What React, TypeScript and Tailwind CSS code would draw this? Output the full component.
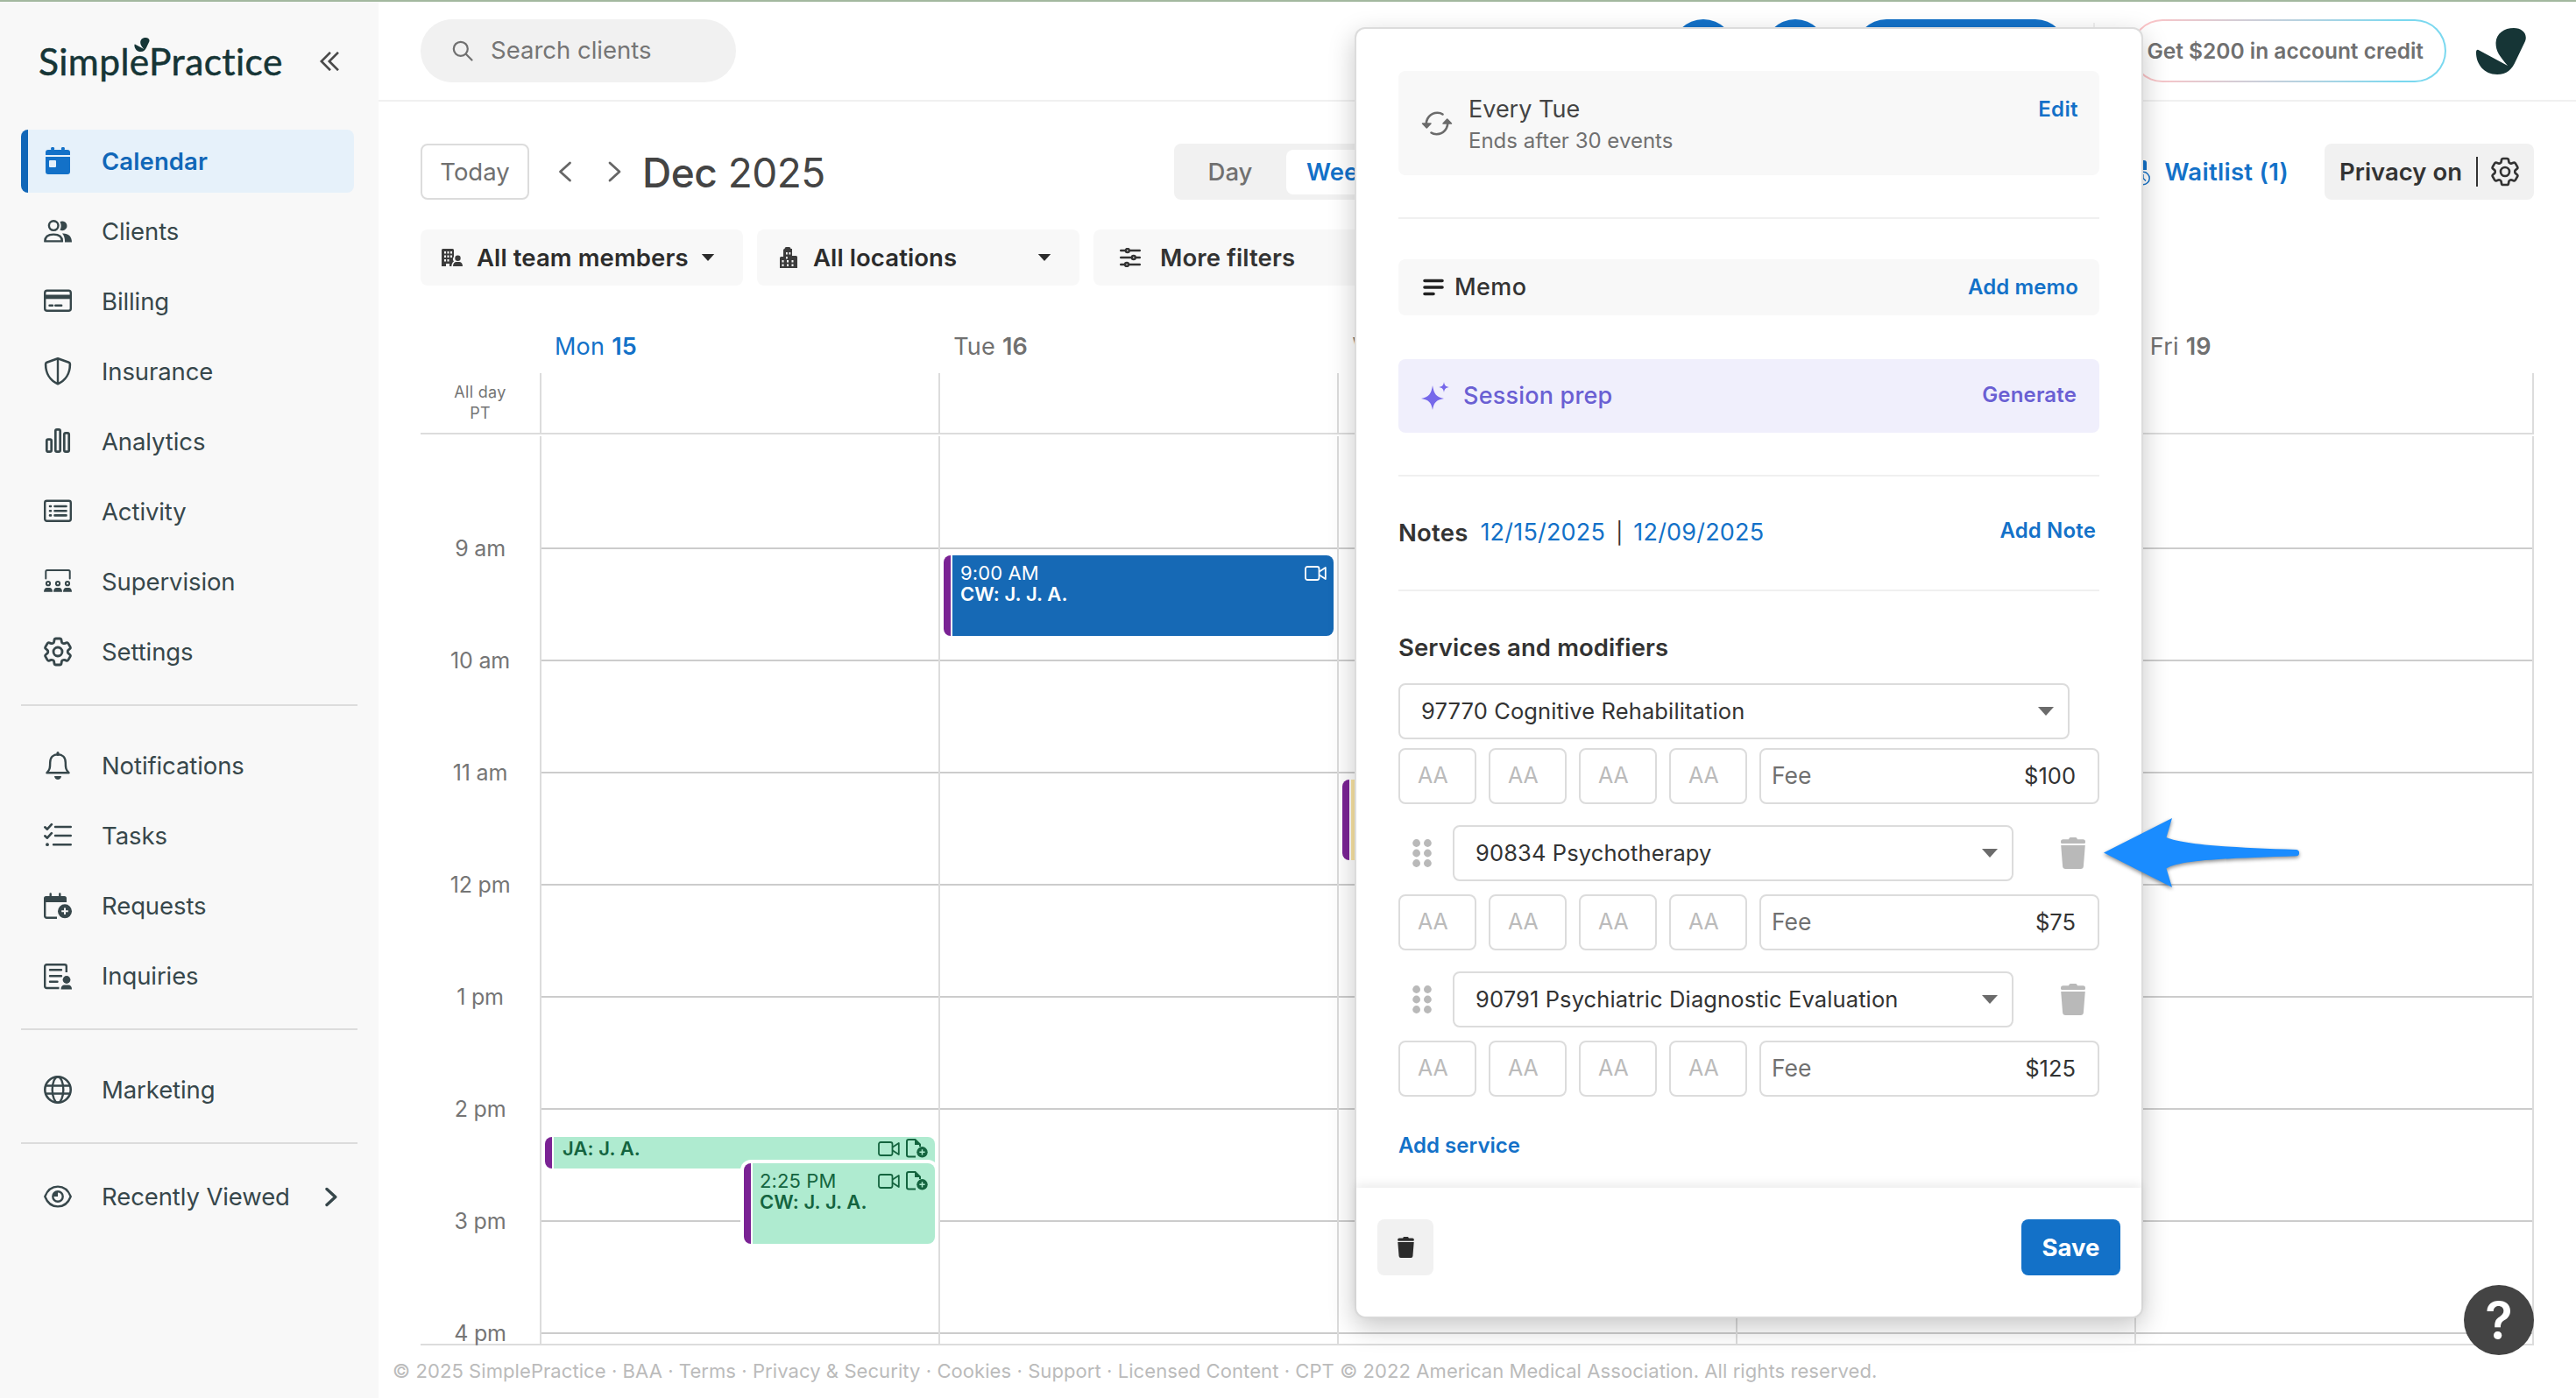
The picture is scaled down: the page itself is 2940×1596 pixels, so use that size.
import type { ReactNode } from "react";
import { HiOutlineCog6Tooth } from "react-icons/hi2";

const Icon = (props: { children: ReactNode; className?: string }) => (
  <svg viewBox="0 0 32 32" fill="none" stroke="currentColor" strokeWidth="2.4" className={props.className ?? "size-8"}>
    {props.children}
  </svg>
);

const CalendarIcon = () => (
  <Icon>
    <g fill="currentColor" stroke="none">
      <rect x="8.2" y="0" width="3.8" height="6" rx="1.2" />
      <rect x="20" y="0" width="3.8" height="6" rx="1.2" />
      <path d="M2 9V6a3 3 0 0 1 3-3h22a3 3 0 0 1 3 3v3z" />
      <path fillRule="evenodd" d="M2 11h28v17a3 3 0 0 1-3 3H5a3 3 0 0 1-3-3zM7 15a1 1 0 0 0-1 1v6a1 1 0 0 0 1 1h6a1 1 0 0 0 1-1v-6a1 1 0 0 0-1-1z" />
    </g>
  </Icon>
);

const ClientsIcon = () => (
  <Icon>
    <circle cx="11.2" cy="9.6" r="5.3" />
    <path d="M1.3 27.4c0-5.4 4.2-7.8 9.8-7.8s9.8 2.4 9.8 7.8z" strokeLinejoin="round" />
    <path d="M18.4 5.2a5.4 5.4 0 1 1 0 9.4c1.7-2.9 1.7-6.5 0-9.4z" fill="currentColor" stroke="none" />
    <path d="M21 18.6c6.600-.4 11 3 11 10h-8c.2-4-.7-7.400-3-10z" fill="currentColor" stroke="none" />
  </Icon>
);

const BillingIcon = () => (
  <Icon>
    <rect x="1.2" y="3.8" width="29.6" height="23" rx="2.6" />
    <rect x="1.2" y="8.5" width="29.6" height="4.8" fill="currentColor" stroke="none" />
    <path d="M6.5 20.7h3.5M13.2 20.7h7" strokeLinecap="round" />
  </Icon>
);

const InsuranceIcon = () => (
  <Icon>
    <path d="M16 1.2 28.6 5.8c1 .4 1.3 1 1.3 2C29.9 18 25 26.5 16 30.2 7 26.5 2.1 18 2.1 7.8c0-1 .3-1.6 1.3-2z" strokeWidth="2.6" strokeLinejoin="round" />
    <path d="M16 1.5v28.5" />
  </Icon>
);

const AnalyticsIcon = () => (
  <Icon>
    <rect x="3.3" y="13.7" width="5.4" height="14" rx="1.6" strokeWidth="2.7" />
    <rect x="13.3" y="2.3" width="5.4" height="25.4" rx="1.6" strokeWidth="2.7" />
    <rect x="23.3" y="6.3" width="5.4" height="21.4" rx="1.6" strokeWidth="2.7" />
  </Icon>
);

const ActivityIcon = () => (
  <Icon>
    <rect x="1.2" y="3.8" width="29.6" height="23" rx="2.2" />
    <path d="M7 10h1M7 15.2h1M7 20.4h1M12.5 10h13M12.5 15.2h13M12.5 20.4h13" strokeWidth="2.6" strokeLinecap="round" />
  </Icon>
);

const SupervisionIcon = () => (
  <Icon>
    <path d="M2.3 12.5V4.5c0-1 .6-1.5 1.5-1.5h24.4c.9 0 1.5.5 1.5 1.5v8" strokeWidth="2" strokeLinecap="round" />
    {[5, 16, 27].map((x) => (
      <g key={x} transform={`translate(${x} 0)`}>
        <circle cy="18.2" r="2.1" strokeWidth="2" />
        <path d="M-5 27.7c0-3 1.5-4.7 3.3-4.7h3.4C3.5 23 5 24.7 5 27.7z" fill="currentColor" stroke="none" />
      </g>
    ))}
  </Icon>
);

const BellIcon = () => (
  <Icon>
    <path d="M16 1.5v2" strokeWidth="3" strokeLinecap="round" />
    <path d="M3.4 24.3C7 21 7.2 18 7.2 12.5 7.2 6.5 11 3.2 16 3.2s8.8 3.3 8.8 9.3c0 5.5.2 8.5 3.8 11.8z" strokeLinejoin="round" />
    <path d="M12 28h8c-.3 2.4-1.9 4-4 4s-3.700-1.600-4-4z" fill="currentColor" stroke="none" />
  </Icon>
);

const TasksIcon = () => (
  <Icon>
    <path d="M13 6h17.800M13 16h17.800M11 26.200h19.800" strokeLinecap="round" />
    <path d="m1.300 6.300 2.600 2.400 5-5.500M1.300 16.300l2.600 2.400 5-5.500" strokeWidth="2.6" strokeLinecap="round" strokeLinejoin="round" />
    <circle cx="4" cy="26.2" r="1.9" fill="currentColor" stroke="none" />
  </Icon>
);

const RequestsIcon = () => (
  <Icon>
    <path d="M7.7 2.5v5M18.3 2.5v5" strokeLinecap="round" />
    <path d="M15 29.7H3.2a2 2 0 0 1-2-2V9" />
    <path d="M0 12V7.5A2.5 2.5 0 0 1 2.5 5h21A2.5 2.5 0 0 1 26 7.5V12z" fill="currentColor" stroke="none" />
    <circle cx="24" cy="22.3" r="8" fill="currentColor" stroke="none" />
    <path d="M24 18.5v7.600M20.200 22.300h7.600" stroke="#f8f8f8" strokeWidth="2" />
  </Icon>
);

const InquiriesIcon = () => (
  <Icon>
    <path d="M17.5 30H3.2a2 2 0 0 1-2-2V5.2a2 2 0 0 1 2-2h20.600a2 2 0 0 1 2 2V12" />
    <path d="M7 9.3h13M7 16.3h13M7 22.8h8.5" strokeLinecap="round" />
    <circle cx="26" cy="20.5" r="4.4" fill="currentColor" stroke="none" />
    <path d="M19.5 31.5c0-3.5 1.800-5 4-5h4.5c2.200 0 4 1.500 4 5z" fill="currentColor" stroke="none" />
  </Icon>
);

const GlobeIcon = () => (
  <Icon>
    <circle cx="16" cy="16" r="14.7" strokeWidth="2.6" />
    <ellipse cx="16" cy="16" rx="6.3" ry="14.7" />
    <path d="M2 11.500h28M2 20.500h28" />
  </Icon>
);

const EyeIcon = () => (
  <Icon>
    <path d="M1.3 16C4 9 9.5 4.600 16 4.600S28 9 30.700 16C28 23 22.500 27.400 16 27.400S4 23 1.300 16z" strokeLinejoin="round" />
    <circle cx="16" cy="16" r="5.7" />
    <path d="M16 10.500v5.500h-5.500a5.500 5.500 0 0 1 5.500-5.500z" fill="currentColor" stroke="none" />
  </Icon>
);

const VideoIcon = () => (
  <svg viewBox="0 0 25 17" fill="none" stroke="currentColor" strokeWidth="1.8" strokeLinejoin="round" className="h-[17px] w-[25px]">
    <rect x="1" y="1" width="15.5" height="15" rx="2.2" />
    <path d="M16.5 6.800 23.800 2v13l-7.300-4.800" />
  </svg>
);

const NoteAddIcon = () => (
  <svg viewBox="0 0 25 22" fill="none" stroke="currentColor" strokeWidth="2" className="h-[22px] w-[25px]">
    <path d="M11 20.500H3a2 2 0 0 1-2-2V3a2 2 0 0 1 2-2h7.500L16 6.500V9" />
    <path d="M10 0v7h7z" fill="currentColor" stroke="none" />
    <circle cx="18.5" cy="15.3" r="6.2" fill="currentColor" stroke="none" />
    <path d="M18.5 12.200v6.200M15.400 15.300h6.200" stroke="#afebd0" strokeWidth="1.5" />
  </svg>
);

const TrashIcon = (props: { className: string }) => (
  <svg viewBox="0 0 28 36" fill="currentColor" className={props.className}>
    <path d="M9 2.200C9.400.6 10.500 0 11.500 0h5c1 0 2.100.6 2.500 2.200h6.300A2.700 2.700 0 0 1 28 4.900v.6A1.500 1.500 0 0 1 26.500 7h-25A1.500 1.500 0 0 1 0 5.500v-.6a2.700 2.700 0 0 1 2.700-2.700z" />
    <path d="M.2 9h27.600l-1.900 24a3.300 3.300 0 0 1-3.300 3H5.400a3.300 3.300 0 0 1-3.300-3z" />
  </svg>
);

const LeafIcon = (props: { className: string }) => (
  <svg viewBox="0 0 57 53" fill="#163536" className={props.className}>
    <path d="M36 43C27 32 22.500 27 22.500 17 23 6 32 0 43 0 53 0 59 7 56 15L45 38c-4 9-10 15-21 15C9 53 0 41 0 28c0-3 1.500-4 3.500-2.500z" />
  </svg>
);

const Caret = (props: { className?: string }) => (
  <svg viewBox="0 0 18 10" fill="currentColor" className={props.className ?? "h-2 w-4"}>
    <path d="M0 0h18L9 10z" />
  </svg>
);

const mainNav = [
  { label: "Clients", icon: <ClientsIcon /> },
  { label: "Billing", icon: <BillingIcon /> },
  { label: "Insurance", icon: <InsuranceIcon /> },
  { label: "Analytics", icon: <AnalyticsIcon /> },
  { label: "Activity", icon: <ActivityIcon /> },
  { label: "Supervision", icon: <SupervisionIcon /> },
  { label: "Settings", icon: <HiOutlineCog6Tooth className="-mx-1 size-10" strokeWidth={1.7} /> },
];

const taskNav = [
  { label: "Notifications", icon: <BellIcon /> },
  { label: "Tasks", icon: <TasksIcon /> },
  { label: "Requests", icon: <RequestsIcon /> },
  { label: "Inquiries", icon: <InquiriesIcon /> },
];

const NavItem = (props: { label: string; icon: ReactNode; children?: ReactNode }) => (
  <div className="flex h-[72px] items-center pl-[26px]">
    {props.icon}
    <span className="ml-[34px] pt-0.5">{props.label}</span>
    {props.children}
  </div>
);

const Sidebar = () => (
  <aside className="flex w-[432px] flex-col bg-[#f8f8f8] pr-7 pl-6 text-[27.5px] tracking-[-0.1px] text-[#37474b]">
    <div className="flex h-[146px] items-start pt-[38px] pl-5">
      <div className="relative font-['Lato',sans-serif] text-[42.5px] leading-[60px] font-normal tracking-[0.4px] text-[#163536] [-webkit-text-stroke:0.5px_#163536]">
        SimplePractice
        <LeafIcon className="absolute top-[3px] left-[109px] h-4 w-[18px]" />
      </div>
      <svg viewBox="0 0 22 22" fill="none" stroke="#4a4a4a" strokeWidth="2.6" className="mt-[19px] ml-auto mr-[17px] size-[22px]">
        <path d="M12 .8 1.800 11 12 21.200M21 .8 10.800 11 21 21.200" />
      </svg>
    </div>
    <div className="mb-2 h-[72px] w-[380px] overflow-hidden rounded-lg border-l-8 border-[#1167b8] bg-[#e6f1fa] pl-[18px]">
      <div className="flex h-full items-center gap-[34px] font-semibold tracking-[0.1px] text-[#1167b8]">
        <span className="text-[#1371c8]">
          <CalendarIcon />
        </span>
        <span className="pt-0.5">Calendar</span>
      </div>
    </div>
    <nav className="flex flex-col gap-2">
      {mainNav.map((item) => (
        <NavItem key={item.label} {...item} />
      ))}
    </nav>
    <hr className="mt-6 mb-8 w-[384px] border-t-2 border-[#dcdcdc]" />
    <nav className="flex flex-col gap-2">
      {taskNav.map((item) => (
        <NavItem key={item.label} {...item} />
      ))}
    </nav>
    <hr className="mt-6 mb-8 w-[384px] border-t-2 border-[#dcdcdc]" />
    <NavItem label="Marketing" icon={<GlobeIcon />} />
    <hr className="my-6 w-[384px] border-t-2 border-[#dcdcdc]" />
    <NavItem label="Recently Viewed" icon={<EyeIcon />}>
      <svg viewBox="0 0 14 22" fill="none" stroke="currentColor" strokeWidth="3.4" strokeLinecap="round" strokeLinejoin="round" className="ml-auto mr-[19px] h-[23px] w-[14px]">
        <path d="m2 2 9.800 9L2 20" />
      </svg>
    </NavItem>
  </aside>
);

const Header = () => (
  <header className="flex h-[114px] items-center border-b-2 border-[#f0f0f0] pl-12">
    <div className="flex h-[72px] w-[360px] items-center rounded-full bg-[#f1f1f1] pl-9 text-[27.5px] text-[#757575]">
      <svg viewBox="0 0 24 24" fill="none" stroke="#707070" strokeWidth="2.2" strokeLinecap="round" className="mr-[20px] size-6">
        <circle cx="9.8" cy="9.8" r="8" />
        <path d="m15.800 15.800 6.700 6.700" />
      </svg>
      Search clients
    </div>
    <div className="ml-[1068px] size-[72px] rounded-full bg-[#1371c8]" />
    <div className="ml-[33px] size-[72px] rounded-full bg-[#1371c8]" />
    <div className="ml-8 h-[72px] w-[242px] rounded-full bg-[#1371c8]" />
    <div className="ml-[30px] h-16 w-0.5 bg-[#f0f0f0]" />
    <div className="ml-[41px] h-[72px] w-[360px] rounded-full bg-linear-to-r from-[#fbc3c6] from-5% to-[#7ad8ef] to-85% p-0.5">
      <div className="flex h-full items-center justify-end rounded-full bg-white pr-[24px] text-[24.5px] font-semibold text-[#707070]">
        Get $200 in account credit
      </div>
    </div>
    <LeafIcon className="ml-[34px] h-[53px] w-[57px]" />
  </header>
);

const Toolbar = () => (
  <div className="flex h-16 items-center text-[27.5px]">
    <div className="flex h-16 w-[124px] items-center justify-center rounded-lg border-2 border-[#dcdcdc] pt-px text-[#707070]">
      Today
    </div>
    <svg viewBox="0 0 72 24" fill="none" stroke="#666" strokeWidth="2.8" strokeLinecap="round" strokeLinejoin="round" className="ml-[33px] h-6 w-[72px]">
      <path d="M13.500 2 2.500 12l11 10M59 2l11 10-11 10" />
    </svg>
    <h1 className="ml-[24px] w-[350px] pt-0.5 text-[46px] leading-none tracking-[-0.5px] text-[#444]">
      <span className="font-medium">Dec</span> 2025
    </h1>
    <div className="ml-[257px] flex h-16 w-[420px] items-center rounded-lg bg-[#f1f1f1] font-medium text-[#707070]">
      <span className="flex w-[128px] justify-center pt-px">Day</span>
      <span className="flex h-[51px] w-[130px] items-center rounded-lg bg-white pt-px pl-[23px] font-semibold text-[#1371c8]">Week</span>
    </div>
    <div className="ml-auto flex items-center font-semibold tracking-[0.3px] text-[#1371c8]">
      <Icon className="mr-4 size-8">
        <path d="M2 3h23a3 3 0 0 1 3 3v8H2z" fill="currentColor" stroke="none" />
        <circle cx="24" cy="23.5" r="7.2" fill="#fff" strokeWidth="1.5" />
        <path d="M24 19v4.500l3 3" strokeWidth="1.4" />
      </Icon>
      <span className="pt-0.5">Waitlist (1)</span>
    </div>
    <div className="ml-[41px] flex h-16 w-[239px] items-center rounded-lg bg-[#f1f1f1] pl-[17px] font-semibold text-[#333]">
      <span className="pt-0.5">Privacy on</span>
      <div className="ml-4 h-[34px] w-0.5 bg-[#333]" />
      <HiOutlineCog6Tooth className="ml-[11px] size-10" strokeWidth={1.6} />
    </div>
  </div>
);

const Filters = () => (
  <div className="mt-[34px] flex gap-4 text-[27.5px] font-semibold tracking-[0.1px] text-[#2c2c2c]">
    <div className="flex h-16 w-[368px] items-center rounded-lg bg-[#f8f8f8] pl-6">
      <svg viewBox="0 0 24 20" className="mr-4 h-5 w-6" fill="#3c3c3c">
        <path
          fillRule="evenodd"
          d="M1.500 0h11A1.500 1.500 0 0 1 14 1.500V9c-1.500 2-1.500 4 0 5.500-1.500 1-2.500 2.500-2.700 5.500H9v-3H5v3H0V1.500A1.500 1.500 0 0 1 1.500 0zM3 3v2.500h2V3zm3.500 0v2.500h2V3zM10 3v2.500h2V3zM3 7.500V10h2V7.500zm3.500 0V10h2V7.500zm3.500 0V10h2V7.500zM3 12v2.500h2V12zm3.500 0v2.500h2V12z"
        />
        <circle cx="18.5" cy="10.8" r="3.2" />
        <path d="M13 20c0-3.500 1.800-5 3.800-5h3.400c2 0 3.800 1.500 3.800 5z" />
      </svg>
      <span className="pt-px">All team members</span>
      <Caret className="ml-[14px] h-2 w-4" />
    </div>
    <div className="flex h-16 w-[368px] items-center rounded-lg bg-[#f8f8f8] pl-[26px]">
      <svg viewBox="0 0 20 24" className="mr-[18px] h-6 w-5" fill="#3c3c3c">
        <path
          fillRule="evenodd"
          d="M7.500 0h3A2 2 0 0 1 12.500 2H14v8h4.500A1.500 1.500 0 0 1 20 11.500V24H0V12.500A1.500 1.500 0 0 1 1.500 11H4V3.500A1.500 1.500 0 0 1 5.500 2 2 2 0 0 1 7.500 0zM7 6v2.500h1.800V6zm3.500 0v2.500h1.800V6zM7 11v2.500h1.800V11zM2.500 15v2.500h2V15zM8 15v2.500h2V15zm5.500 0v2.500h2V15zm-11 4.500V22h2v-2.500zm5.500 0V22h2v-2.500zm5.500 0V22h2v-2.500z"
        />
      </svg>
      <span className="pt-px">All locations</span>
      <Caret className="ml-auto mr-8 h-2 w-4" />
    </div>
    <div className="flex h-16 w-[368px] items-center rounded-lg bg-[#f8f8f8] pl-[30px] text-[#333]">
      <svg viewBox="0 0 24 22" fill="none" stroke="currentColor" strokeWidth="2.4" strokeLinecap="round" className="mr-[22px] h-[22px] w-6">
        <path d="M1.200 3h4.500M12 3h10.800M1.200 11h11M19 11h3.800M1.200 19h3.500M11 19h11.800" />
        <circle cx="8.8" cy="3" r="2" />
        <circle cx="15.8" cy="11" r="2" />
        <circle cx="8" cy="19" r="2" />
      </svg>
      <span className="pt-0.5">More filters</span>
    </div>
  </div>
);

const days = [
  { day: "Mon", date: "15", color: "text-[#1371c8]" },
  { day: "Tue", date: "16", color: "text-[#707070]" },
  { day: "Wed", date: "17", color: "text-[#707070]" },
  { day: "Thu", date: "18", color: "text-[#707070]" },
  { day: "Fri", date: "19", color: "text-[#707070]" },
];

const hours = ["9 am", "10 am", "11 am", "12 pm", "1 pm", "2 pm", "3 pm", "4 pm"];

const events = [
  { id: 1, place: "left-[597px] top-[136px] h-[92px] w-[445px]", tone: "bg-[#1669b5] text-white pl-[9px] pt-2", time: "9:00 AM", name: "CW: J. J. A.", video: true },
  { id: 2, place: "left-[142px] top-[800px] h-9 w-[445px]", tone: "bg-[#afebd0] text-[#14643f] pl-[10px] pt-px", name: "JA: J. A.", video: true, note: true },
  { id: 3, place: "left-[369px] top-[830px] h-[92px] w-[218px] ring-4 ring-white", tone: "bg-[#afebd0] text-[#14643f] pl-2 pt-2", time: "2:25 PM", name: "CW: J. J. A.", video: true, note: true },
  { id: 4, place: "left-[1052px] top-[392px] h-[92px] w-[445px]", tone: "bg-[#fbe5a4]" },
];

const Calendar = () => (
  <div>
    <div className="mt-[50px] ml-[136px] grid w-[2276px] grid-cols-5 text-[27px] tracking-[0.2px]">
      {days.map((d) => (
        <div key={d.day} className={`flex h-10 items-center gap-2 pl-[17px] ${d.color}`}>
          {d.day} <span className="font-semibold">{d.date}</span>
        </div>
      ))}
    </div>
    <div className="mt-[10px] flex h-[70px] w-[2412px] border-b-2 border-[#dcdcdc]">
      <div className="flex w-[136px] items-center justify-center text-center text-[18px] leading-6 tracking-[0.3px] text-[#757575]">
        All day
        <br />
        PT
      </div>
      {days.map((d) => (
        <div key={d.day} className="w-[455px] border-l-2 border-[#dcdcdc] last:w-[456px] last:border-r-2" />
      ))}
    </div>
    <div className="relative mt-0.5 h-[1038px] w-[2412px] border-b-2 border-[#dcdcdc]">
      {hours.map((hour) => (
        <div key={hour} className="flex h-32 first:h-[129px]">
          <div className="flex w-[136px] translate-y-[14px] items-end justify-center text-[25px] leading-[30px] tracking-[-0.2px] text-[#757575]">{hour}</div>
          {days.map((d) => (
            <div key={d.day} className="w-[455px] border-l-2 border-[#dcdcdc] last:w-[456px] last:border-r-2">
              <div className="h-full border-b-2 border-[#ccc]" />
            </div>
          ))}
        </div>
      ))}
      <div className="ml-[136px] flex h-[11px]">
        {days.map((d) => (
          <div key={d.day} className="w-[455px] border-l-2 border-[#dcdcdc] last:w-[456px] last:border-r-2" />
        ))}
      </div>
      {events.map((event) => (
        <div key={event.id} className={`absolute flex gap-0.5 rounded-lg bg-white ${event.place}`}>
          <div className="w-2 rounded-l-lg bg-[#7a2294]" />
          <div className={`flex flex-1 justify-between rounded-r-lg pr-2 text-[22px] leading-6 tracking-[0.1px] ${event.tone}`}>
            <div>
              {event.time && <p>{event.time}</p>}
              <p className="font-semibold">{event.name}</p>
            </div>
            <div className="flex h-6 items-center gap-[7px]">
              {event.video && <VideoIcon />}
              {event.note && <NoteAddIcon />}
            </div>
          </div>
        </div>
      ))}
    </div>
    <p className="-ml-8 mt-[14px] text-[22px] leading-[30px] tracking-[0.075px] text-[#bbb]">
      © 2025 SimplePractice · BAA · Terms · Privacy &amp; Security · Cookies · Support · Licensed Content · CPT © 2022 American Medical Association. All rights reserved.
    </p>
  </div>
);

const Select = (props: { label: string; className: string }) => (
  <div className={`flex h-16 items-center justify-between rounded-lg border-2 border-[#dcdcdc] pr-4 pl-6 text-[25.5px] tracking-[0.12px] text-[#333] ${props.className}`}>
    {props.label}
    <Caret className="h-[10px] w-[18px] text-[#6b6b6b]" />
  </div>
);

const Modifiers = (props: { fee: string }) => (
  <div className="flex h-16 gap-[14px] text-[25.5px]">
    {[0, 1, 2, 3].map((i) => (
      <div key={i} className="flex w-[89px] items-center rounded-lg border-2 border-[#dcdcdc] pl-5 text-[25px] text-[#bbb]">
        AA
      </div>
    ))}
    <div className="flex flex-1 items-center justify-between rounded-lg border-2 border-[#dcdcdc] pr-[25px] pl-3">
      <span className="text-[26.5px] text-[#707070]">Fee</span>
      <span className="text-[#333]">{props.fee}</span>
    </div>
  </div>
);

const ServiceRow = (props: { label: string }) => (
  <div className="flex h-16 items-center">
    <svg viewBox="0 0 22 32" fill="#b9b9b9" className="mr-6 ml-4 h-8 w-[22px]">
      {[4.5, 16, 27.5].map((y) => (
        <g key={y}>
          <circle cx="4.6" cy={y} r="4.4" />
          <circle cx="17.4" cy={y} r="4.4" />
        </g>
      ))}
    </svg>
    <Select label={props.label} className="w-[640px]" />
    <TrashIcon className="ml-[54px] h-9 w-7 text-[#b9b9b9]" />
  </div>
);

const AppointmentPanel = () => (
  <div className="absolute top-[31px] left-[1546px] flex h-[1474px] w-[900px] flex-col rounded-xl border-2 border-[#dcdcdc] bg-white shadow-[0_10px_30px_rgba(0,0,0,0.22)]">
    <div className="flex flex-1 flex-col px-12 pt-12 pb-[30px]">
      <div className="flex h-[119px] items-start justify-between rounded-lg bg-[#f8f8f8] pt-[25px] pr-6 pl-[26px]">
        <div className="flex items-center">
          <svg viewBox="0 0 36 28" fill="none" stroke="#6b6b6b" strokeWidth="2.6" strokeLinecap="round" strokeLinejoin="round" className="-mt-1 mr-[18px] h-7 w-9">
            <path d="M6 17.500C4.500 8 11 1.800 18.500 1.800c2.500 0 4.500.6 6 1.700M30 10.500c1.500 9.500-5 15.700-12.500 15.700-2.500 0-4.500-.6-6-1.700" />
            <path d="m1.500 14 4.800 5 4.700-5zM34.500 14l-4.800-5-4.700 5z" fill="#6b6b6b" strokeWidth="1.5" />
          </svg>
          <div>
            <p className="pt-px text-[27px] leading-9 text-[#444]">Every Tue</p>
            <p className="text-2xl leading-9 text-[#707070]">Ends after 30 events</p>
          </div>
        </div>
        <span className="pt-px text-2xl leading-9 font-semibold tracking-[0.4px] text-[#1371c8]">Edit</span>
      </div>
      <hr className="mt-12 border-t-2 border-[#f0f0f0]" />
      <div className="mt-[46px] flex h-16 items-center justify-between rounded-lg bg-[#f8f8f8] pr-6 pl-7">
        <div className="flex items-center text-[27px] font-medium tracking-[0.4px] text-[#333]">
          <svg viewBox="0 0 24 20" fill="none" stroke="#222" strokeWidth="3.6" strokeLinecap="round" className="mr-3 h-5 w-6">
            <path d="M2 2.500h20M2 10h20M2 17.500h10" />
          </svg>
          <span className="pt-px">Memo</span>
        </div>
        <span className="text-2xl font-semibold tracking-[0.1px] text-[#1371c8]">Add memo</span>
      </div>
      <div className="mt-[50px] flex h-[84px] items-center justify-between rounded-lg bg-[#f0effc] px-[26px]">
        <div className="flex items-center text-[27px] font-medium tracking-[0.2px] text-[#6a5fd3]">
          <svg viewBox="0 0 32 32" fill="#7668ea" className="mr-4 size-8">
            <path d="M13 4c1.600 9.500 4 13.500 13 15-9 1.500-11.400 4.500-13 13-1.600-8.500-4-11.500-13-13 9-1.500 11.400-5.500 13-15zM26 0c.6 4 2 5.400 6 6-4 .6-5.400 2-6 6-.6-4-2-5.400-6-6 4-.6 5.400-2 6-6z" />
          </svg>
          <span className="pt-px">Session prep</span>
        </div>
        <span className="mb-[3px] text-2xl font-semibold tracking-[0.15px] text-[#6a5fd3]">Generate</span>
      </div>
      <hr className="mt-12 border-t-2 border-[#f0f0f0]" />
      <div className="flex h-[129px] items-center text-[27px] tracking-[0.2px]">
        <span className="text-[27.5px] font-semibold text-[#333]">Notes</span>
        <span className="ml-[14px] text-[#1371c8]">12/15/2025</span>
        <span className="mx-3 text-2xl text-[#333]">|</span>
        <span className="text-[#1371c8]">12/09/2025</span>
        <span className="mb-[5px] mr-1 ml-auto text-2xl font-semibold tracking-[0.15px] text-[#1371c8]">Add Note</span>
      </div>
      <hr className="border-t-2 border-[#f0f0f0]" />
      <h2 className="mt-[46px] mb-[23px] text-[27.5px] leading-9 font-semibold tracking-[0.1px] text-[#333]">Services and modifiers</h2>
      <Select label="97770 Cognitive Rehabilitation" className="mb-[10px] w-[766px]" />
      <Modifiers fee="$100" />
      <div className="mt-6 mb-[15px]">
        <ServiceRow label="90834 Psychotherapy" />
      </div>
      <Modifiers fee="$75" />
      <div className="mt-6 mb-[15px]">
        <ServiceRow label="90791 Psychiatric Diagnostic Evaluation" />
      </div>
      <Modifiers fee="$125" />
      <span className="mt-[38px] text-2xl leading-9 font-semibold text-[#1371c8]">Add service</span>
    </div>
    <div className="flex h-[147px] items-start justify-between rounded-b-xl bg-white px-6 pt-9 shadow-[0_-4px_12px_rgba(0,0,0,0.08)]">
      <div className="flex size-16 items-center justify-center rounded-lg bg-[#f1f1f1]">
        <TrashIcon className="h-6 w-[19px] text-[#2c2c2c]" />
      </div>
      <div className="flex h-16 w-[113px] items-center justify-center rounded-lg bg-[#1371c8] pt-px text-[27.5px] font-bold text-white">Save</div>
    </div>
  </div>
);

const App = () => {
  return (
    <div className="relative flex h-[1596px] w-[2940px] flex-col overflow-hidden bg-white font-['Inter',sans-serif]">
      <div className="h-0.5 bg-[#a3b89f]" />
      <div className="flex flex-1">
        <Sidebar />
        <main className="flex flex-1 flex-col">
          <Header />
          <div className="px-12 pt-12">
            <Toolbar />
            <Filters />
            <Calendar />
          </div>
        </main>
      </div>
      <AppointmentPanel />
      <svg viewBox="0 0 230 90" className="absolute top-[930px] left-[2398px] h-[90px] w-[230px] drop-shadow-[0_2px_2px_rgba(0,0,0,0.45)]">
        <path d="M3 43.500 81 4l-6.500 22C92 34 150 38 223 40a3.700 3.700 0 0 1 0 7.300C150 50 92 51 74.500 61.500L81 83z" fill="#1a8cff" />
      </svg>
      <div className="absolute top-[1467px] left-[2812px] flex size-20 items-center justify-center rounded-full bg-[#444] text-[58px] font-semibold text-white">
        ?
      </div>
    </div>
  );
};

export default App;
